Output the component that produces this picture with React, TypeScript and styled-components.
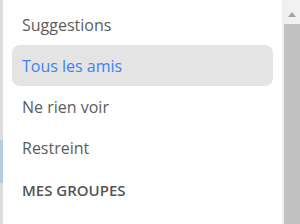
import React, { FunctionComponent } from "react";
import styled, { createGlobalStyle } from "styled-components";

const GlobalStyle = createGlobalStyle`
  html, body {
    margin: 0;
    padding: 0;
    background: #ffffff;
  }
  body {
    font-family: "Open Sans", "Liberation Sans", sans-serif;
  }
`;

const Frame = styled.div`
  display: flex;
  width: 300px;
  height: 224px;
  overflow: hidden;
  background: #ffffff;
`;

const EdgeStrip = styled.div`
  width: 3px;
  display: flex;
  flex-direction: column;
  background: #dcdcdc;
`;

const EdgeMark = styled.div`
  margin-top: 140px;
  height: 43px;
  background: #b8cbe4;
`;

const Menu = styled.ul`
  flex: 1;
  list-style: none;
  margin: 0;
  padding: 4px 9px 0 9px;
  display: flex;
  flex-direction: column;
`;

const MenuItem = styled.li<{ $active?: boolean }>`
  height: 41px;
  display: flex;
  align-items: center;
  padding-left: 10px;
  border-radius: 8px;
  font-size: 16px;
  color: ${(p) => (p.$active ? "#3b82f6" : "#5c5c5c")};
  background: ${(p) => (p.$active ? "#e4e4e4" : "transparent")};
`;

const SectionTitle = styled.li`
  height: 44px;
  display: flex;
  align-items: center;
  padding-left: 10px;
  font-size: 15px;
  font-weight: 600;
  color: #555555;
  text-transform: uppercase;
`;

const Scrollbar = styled.div`
  width: 17px;
  display: flex;
  flex-direction: column;
  border-left: 1px solid #ededed;
  background: #f1f1f1;
`;

const ScrollArrow = styled.div`
  height: 20px;
  margin-top: 4px;
  display: flex;
  align-items: center;
  justify-content: center;
  background: #f1f1f1;
`;

const ScrollThumb = styled.div`
  flex: 1;
  margin-left: 1px;
  background: #c1c1c1;
`;

const items = [
  { label: "Suggestions" },
  { label: "Tous les amis", active: true },
  { label: "Ne rien voir" },
  { label: "Restreint" },
];

const App: FunctionComponent = () => {
  return (
    <>
      <GlobalStyle />
      <Frame>
        <EdgeStrip>
          <EdgeMark />
        </EdgeStrip>
        <Menu>
          {items.map((item) => (
            <MenuItem key={item.label} $active={item.active}>
              {item.label}
            </MenuItem>
          ))}
          <SectionTitle>Mes groupes</SectionTitle>
        </Menu>
        <Scrollbar>
          <ScrollArrow>
            <svg width="8" height="5" viewBox="0 0 8 5">
              <polygon points="4,0 8,5 0,5" fill="#a3a3a3" />
            </svg>
          </ScrollArrow>
          <ScrollThumb />
        </Scrollbar>
      </Frame>
    </>
  );
};

export default App;
